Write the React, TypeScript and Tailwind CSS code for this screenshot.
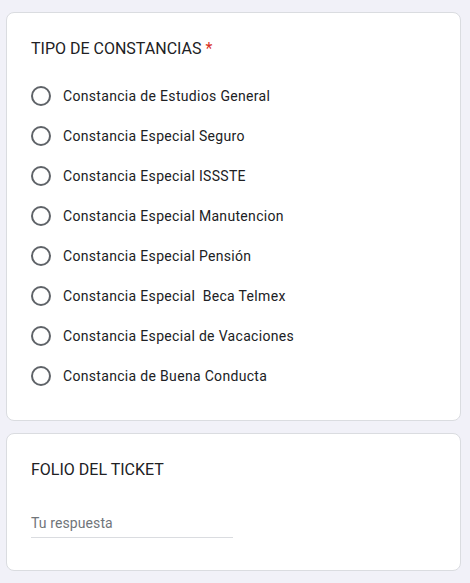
import React from "react";

const options = [
  "Constancia de Estudios General",
  "Constancia Especial Seguro",
  "Constancia Especial ISSSTE",
  "Constancia Especial Manutencion",
  "Constancia Especial Pensión",
  "Constancia Especial  Beca Telmex",
  "Constancia Especial de Vacaciones",
  "Constancia de Buena Conducta",
];

export default function App() {
  return (
    <div
      className="min-h-[583px] bg-[#f1f1f8] pt-[12px] pl-[6px] pr-[9px] pb-[12px] flex flex-col gap-[12px]"
      style={{ fontFamily: "Roboto, 'Liberation Sans', sans-serif" }}
    >
      <div className="bg-white border border-[#dadce0] rounded-[8px] px-[24px] pt-[24px] pb-[24px]">
        <div className="text-[16px] leading-[24px] text-[#202124]">
          TIPO DE CONSTANCIAS<span className="text-[#d93025]"> *</span>
        </div>
        <div className="mt-[15px] flex flex-col">
          {options.map((o) => (
            <div key={o} className="h-[40px] flex items-center gap-[12px]">
              <div className="w-[20px] h-[20px] rounded-full border-2 border-[#5f6368] shrink-0" />
              <span className="text-[14px] leading-[20px] tracking-[0.32px] text-[#202124] whitespace-pre">
                {o}
              </span>
            </div>
          ))}
        </div>
      </div>
      <div className="bg-white border border-[#dadce0] rounded-[8px] px-[24px] pt-[24px] pb-[32px]">
        <div className="text-[16px] leading-[24px] text-[#202124]">
          FOLIO DEL TICKET
        </div>
        <div className="mt-[31px] w-[202px] border-b border-[#dadce0] pb-[4px]">
          <div className="text-[14px] leading-[20px] tracking-[0.1px] text-[#70757a]">
            Tu respuesta
          </div>
        </div>
      </div>
    </div>
  );
}
